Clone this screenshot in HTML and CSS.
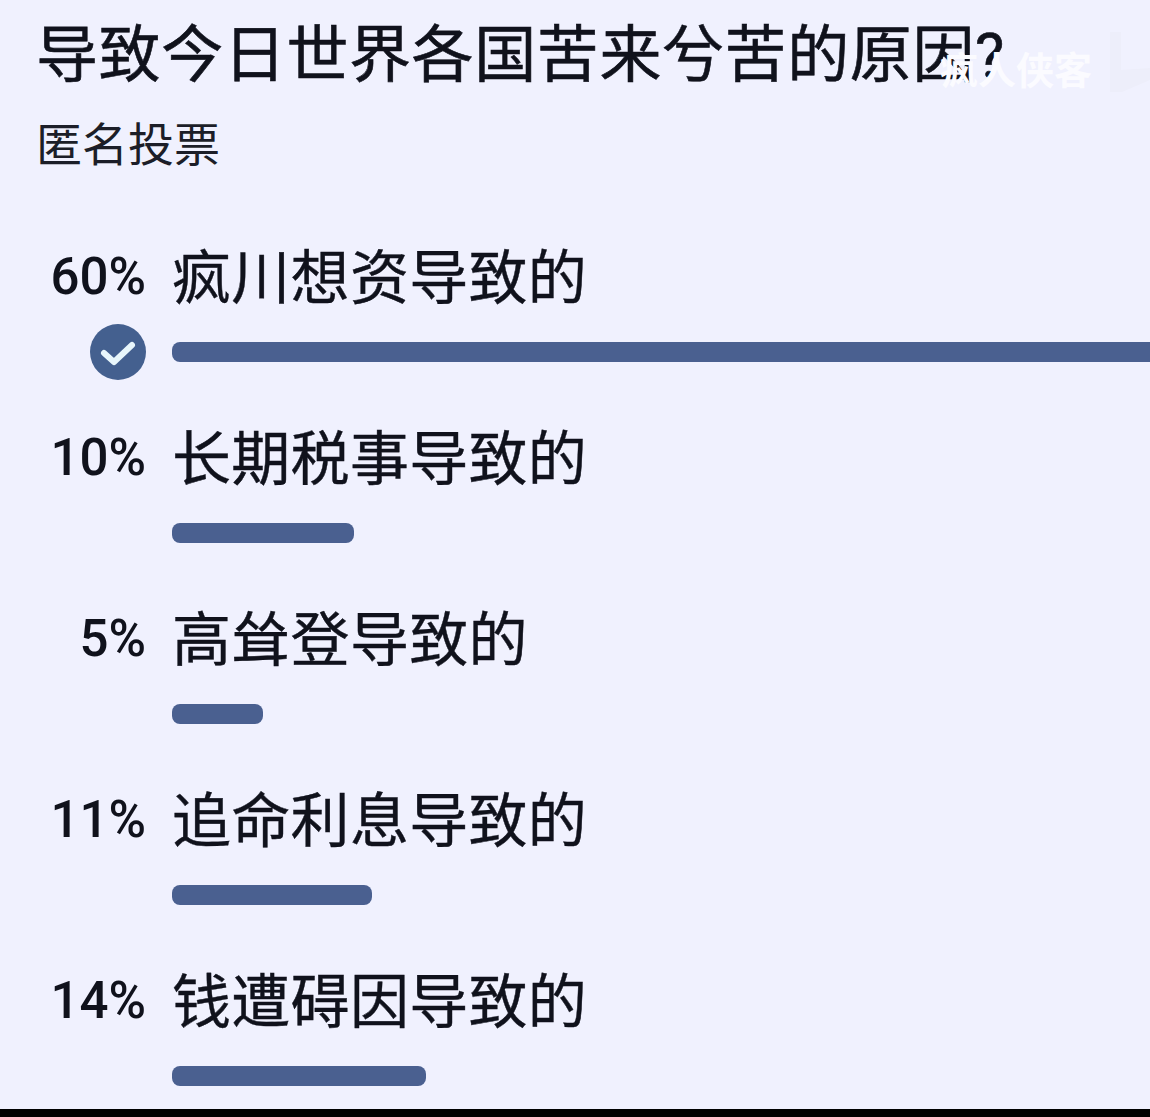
FILE: index.html
```html
<!DOCTYPE html>
<html lang="zh-CN">
<head>
    <meta charset="UTF-8">
    <title>匿名投票</title>
    <link rel="stylesheet" href="styles.css">
</head>
<body>
    <main class="poll">
        <h1 class="poll-title">导致今日世界各国苦来兮苦的原因?</h1>
        <p class="poll-sub">匿名投票</p>

        <section class="options">
            <div class="option">
                <span class="pct">60%</span>
                <span class="label">疯川想资导致的</span>
                <span class="check">
                    <svg width="56" height="56" viewBox="0 0 56 56">
                        <circle cx="28" cy="28" r="28" fill="#44608f"/>
                        <path d="M14 29 L24 38 L42 21" fill="none" stroke="#e8f6fb" stroke-width="6" stroke-linecap="round" stroke-linejoin="round"/>
                    </svg>
                </span>
                <div class="bar" style="width: 1000px"></div>
            </div>
            <div class="option">
                <span class="pct">10%</span>
                <span class="label">长期税事导致的</span>
                <div class="bar" style="width: 182px"></div>
            </div>
            <div class="option">
                <span class="pct">5%</span>
                <span class="label">高耸登导致的</span>
                <div class="bar" style="width: 91px"></div>
            </div>
            <div class="option">
                <span class="pct">11%</span>
                <span class="label">追命利息导致的</span>
                <div class="bar" style="width: 200px"></div>
            </div>
            <div class="option">
                <span class="pct">14%</span>
                <span class="label">钱遭碍因导致的</span>
                <div class="bar" style="width: 254px"></div>
            </div>
        </section>
    </main>

    <div class="watermark">疯人侠客</div>
    <svg class="watermark-logo" width="40" height="60" viewBox="0 0 40 60">
        <path d="M0 0 H11 V38 L40 36 V48 L12 60 H0 Z" fill="#edeefa"/>
    </svg>
    <div class="footer-bar"></div>
</body>
</html>
```

FILE: styles.css
```css
body { margin: 0; height: 1117px; overflow: hidden; background: #f0f1fe; color: #10121c; font-family: Roboto, "Noto Sans CJK SC", sans-serif; display: flex; flex-direction: column; }
.poll { flex: 1; padding: 14px 0 0 36px; overflow: hidden; }
.poll-title { margin: 0; font-size: 62px; line-height: 84px; font-weight: 400; letter-spacing: 0.6px; white-space: nowrap; -webkit-text-stroke: 0.6px #10121c; }
.poll-sub { margin: 15px 0 0 0; font-size: 46px; line-height: 64px; color: #1c1e28; }
.options { margin-top: 60px; display: flex; flex-direction: column; gap: 19px; }
.option { display: grid; grid-template-columns: 110px 1fr; grid-template-rows: 84px 56px; column-gap: 26px; row-gap: 3px; align-items: center; height: 162px; align-content: start; }
.pct { align-self: start; font-size: 51px; font-weight: 500; line-height: 80px; text-align: right; }
.label { font-size: 59px; line-height: 84px; letter-spacing: 0.3px; white-space: nowrap; -webkit-text-stroke: 0.4px #10121c; }
.check { grid-column: 1; grid-row: 2; display: flex; justify-content: flex-end; }
.check svg { display: block; }
.bar { grid-column: 2; grid-row: 2; height: 20px; border-radius: 8px; background: #4a6090; }
.watermark { position: absolute; left: 940px; top: 44px; font-family: "Noto Sans CJK SC", sans-serif; font-size: 38px; line-height: 48px; font-weight: 700; color: #fbfbff; white-space: nowrap; }
.watermark-logo { position: absolute; left: 1110px; top: 32px; }
.footer-bar { height: 8px; background: #000; }
```
